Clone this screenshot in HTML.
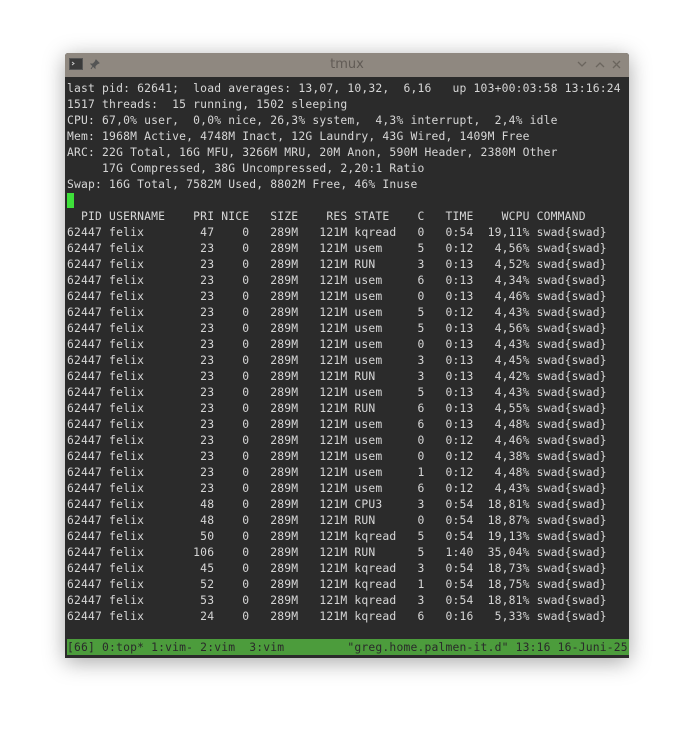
<!DOCTYPE html>
<html><head><meta charset="utf-8"><style>
html,body{margin:0;padding:0;width:694px;height:735px;background:#fff;overflow:hidden}
.win{position:absolute;left:65px;top:53px;width:564px;height:605px;background:#2b2b2b;box-shadow:0 4px 22px rgba(0,0,0,.35);border-radius:3px 3px 0 0;overflow:hidden}
.tb{position:absolute;left:0;top:0;width:564px;height:24px;background:#8f8880}
.tb .t{position:absolute;left:0;right:0;top:4px;text-align:center;font:13px "DejaVu Sans","Liberation Sans",sans-serif;color:#615b55}
.term{position:absolute;left:2px;top:26px;width:562px;height:579px;background:#2b2b2b}
pre{margin:0;position:absolute;left:0;top:1px;font-family:"DejaVu Sans Mono","Liberation Mono",monospace;font-size:11.35px;letter-spacing:0.18px;line-height:16px;color:#d6d6d6;white-space:pre}
.cur{position:absolute;left:0;top:114px;width:7px;height:15px;background:#3ee03a}
.sb{position:absolute;left:0;top:560px;width:562px;height:16px;background:#4c9c3c}
.sb pre{top:0;color:#2a2a2a}
</style></head><body>
<div class="win">
<div class="tb">
<svg style="position:absolute;left:4px;top:5px" width="14" height="13"><rect x="0.5" y="0.5" width="13" height="11" fill="#3a3a3a" stroke="#555"/><path d="M3 4l2 1.5-2 1.5" stroke="#ccc" fill="none"/></svg>
<svg style="position:absolute;left:25px;top:6px" width="10" height="11"><path d="M6 1l3 3-2 1-2 2 0 2-4-4 2 0 2-2z M3 7l-2 3" stroke="#555" fill="#555" stroke-width="1"/></svg>
<div class="t">tmux</div>
<svg style="position:absolute;left:510px;top:6px" width="50" height="12"><path d="M3 3l4 4 4-4" stroke="#6b655e" fill="none" stroke-width="1.3"/><path d="M21 8l4-4 4 4" stroke="#6b655e" fill="none" stroke-width="1.3"/><path d="M38 2l7 7M45 2l-7 7" stroke="#6b655e" fill="none" stroke-width="1.3"/></svg>
</div>
<div class="term">
<pre>last pid: 62641;  load averages: 13,07, 10,32,  6,16   up 103+00:03:58 13:16:24
1517 threads:  15 running, 1502 sleeping
CPU: 67,0% user,  0,0% nice, 26,3% system,  4,3% interrupt,  2,4% idle
Mem: 1968M Active, 4748M Inact, 12G Laundry, 43G Wired, 1409M Free
ARC: 22G Total, 16G MFU, 3266M MRU, 20M Anon, 590M Header, 2380M Other
     17G Compressed, 38G Uncompressed, 2,20:1 Ratio
Swap: 16G Total, 7582M Used, 8802M Free, 46% Inuse

  PID USERNAME    PRI NICE   SIZE    RES STATE    C   TIME    WCPU COMMAND
62447 felix        47    0   289M   121M kqread   0   0:54  19,11% swad{swad}
62447 felix        23    0   289M   121M usem     5   0:12   4,56% swad{swad}
62447 felix        23    0   289M   121M RUN      3   0:13   4,52% swad{swad}
62447 felix        23    0   289M   121M usem     6   0:13   4,34% swad{swad}
62447 felix        23    0   289M   121M usem     0   0:13   4,46% swad{swad}
62447 felix        23    0   289M   121M usem     5   0:12   4,43% swad{swad}
62447 felix        23    0   289M   121M usem     5   0:13   4,56% swad{swad}
62447 felix        23    0   289M   121M usem     0   0:13   4,43% swad{swad}
62447 felix        23    0   289M   121M usem     3   0:13   4,45% swad{swad}
62447 felix        23    0   289M   121M RUN      3   0:13   4,42% swad{swad}
62447 felix        23    0   289M   121M usem     5   0:13   4,43% swad{swad}
62447 felix        23    0   289M   121M RUN      6   0:13   4,55% swad{swad}
62447 felix        23    0   289M   121M usem     6   0:13   4,48% swad{swad}
62447 felix        23    0   289M   121M usem     0   0:12   4,46% swad{swad}
62447 felix        23    0   289M   121M usem     0   0:12   4,38% swad{swad}
62447 felix        23    0   289M   121M usem     1   0:12   4,48% swad{swad}
62447 felix        23    0   289M   121M usem     6   0:12   4,43% swad{swad}
62447 felix        48    0   289M   121M CPU3     3   0:54  18,81% swad{swad}
62447 felix        48    0   289M   121M RUN      0   0:54  18,87% swad{swad}
62447 felix        50    0   289M   121M kqread   5   0:54  19,13% swad{swad}
62447 felix       106    0   289M   121M RUN      5   1:40  35,04% swad{swad}
62447 felix        45    0   289M   121M kqread   3   0:54  18,73% swad{swad}
62447 felix        52    0   289M   121M kqread   1   0:54  18,75% swad{swad}
62447 felix        53    0   289M   121M kqread   3   0:54  18,81% swad{swad}
62447 felix        24    0   289M   121M kqread   6   0:16   5,33% swad{swad}</pre>
<div class="cur"></div>
<div class="sb"><pre>[66] 0:top* 1:vim- 2:vim  3:vim         "greg.home.palmen-it.d" 13:16 16-Juni-25</pre></div>
</div>
</div>
</body></html>
